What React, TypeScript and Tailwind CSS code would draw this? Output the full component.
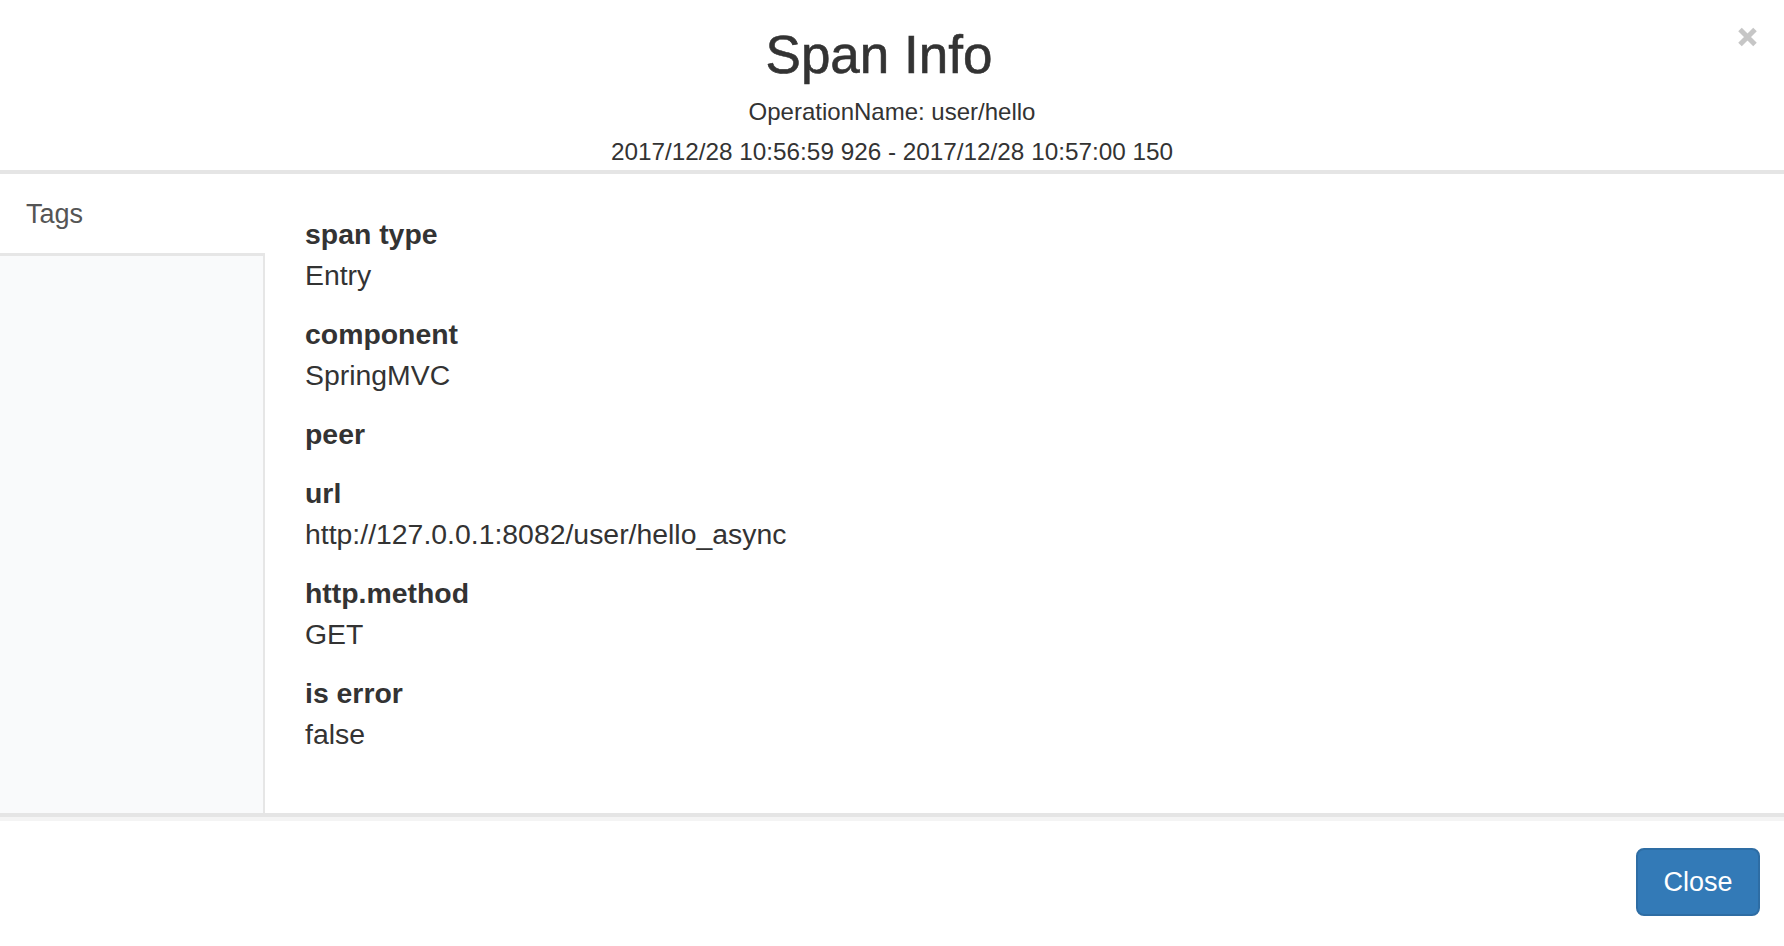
import React from "react";

const items: { label: string; value: string }[] = [
  { label: "span type", value: "Entry" },
  { label: "component", value: "SpringMVC" },
  { label: "peer", value: "" },
  { label: "url", value: "http://127.0.0.1:8082/user/hello_async" },
  { label: "http.method", value: "GET" },
  { label: "is error", value: "false" },
];

export default function App() {
  return (
    <div
      className="flex h-[946px] w-full flex-col bg-white text-[#333333]"
      style={{ fontFamily: '"Liberation Sans", Arial, Helvetica, sans-serif' }}
    >
      {/* Header */}
      <div className="relative shrink-0 border-b-4 border-[#e5e5e5] pt-[25px]">
        <div className="pr-[26px] text-center text-[53px] leading-[60px] [-webkit-text-stroke:0.6px_#333333]">
          Span Info
        </div>
        <button className="absolute right-[26px] top-[27px] flex h-[20px] w-[21px] items-center justify-center">
          <svg width="21" height="20" viewBox="0 0 21 20">
            <path d="M3 2.5 L18 17.5 M18 2.5 L3 17.5" stroke="#c6c6c6" strokeWidth="5" strokeLinecap="butt" />
          </svg>
        </button>
        <div className="mt-[9px] text-center text-[24px] leading-[36px]">OperationName: user/hello</div>
        <div className="mt-[4px] text-center text-[24.3px] leading-[36px]">
          2017/12/28 10:56:59 926 - 2017/12/28 10:57:00 150
        </div>
      </div>

      {/* Body */}
      <div className="flex min-h-0 flex-1">
        <div className="flex w-[265px] shrink-0 flex-col">
          <div className="w-[263px] pt-[25px] pb-[24px] pl-[26px] text-[27px] leading-[30px] text-[#555555]">
            Tags
          </div>
          <div className="flex-1 border-t-[3px] border-r-2 border-[#e6e6e6] bg-[#f9fafb]" />
        </div>
        <div className="flex-1 pt-[40px] pl-[40px]">
          {items.map((it) => (
            <div key={it.label} className="mb-[18px]">
              <div className="text-[28.4px] font-bold leading-[41px]">{it.label}</div>
              {it.value && <div className="text-[28.4px] leading-[41px]">{it.value}</div>}
            </div>
          ))}
        </div>
      </div>

      {/* Footer */}
      <div className="flex h-[133px] shrink-0 flex-col">
        <div className="h-[4px] bg-[#e5e5e5]" />
        <div className="h-[4px] bg-[#f4f4f4]" />
        <div className="flex justify-end pt-[27px] pr-[24px]">
          <button className="flex h-[68px] w-[124px] items-center justify-center rounded-[8px] border-2 border-[#2e6da4] bg-[#337ab7] text-[27px] text-white">
            Close
          </button>
        </div>
      </div>
    </div>
  );
}
